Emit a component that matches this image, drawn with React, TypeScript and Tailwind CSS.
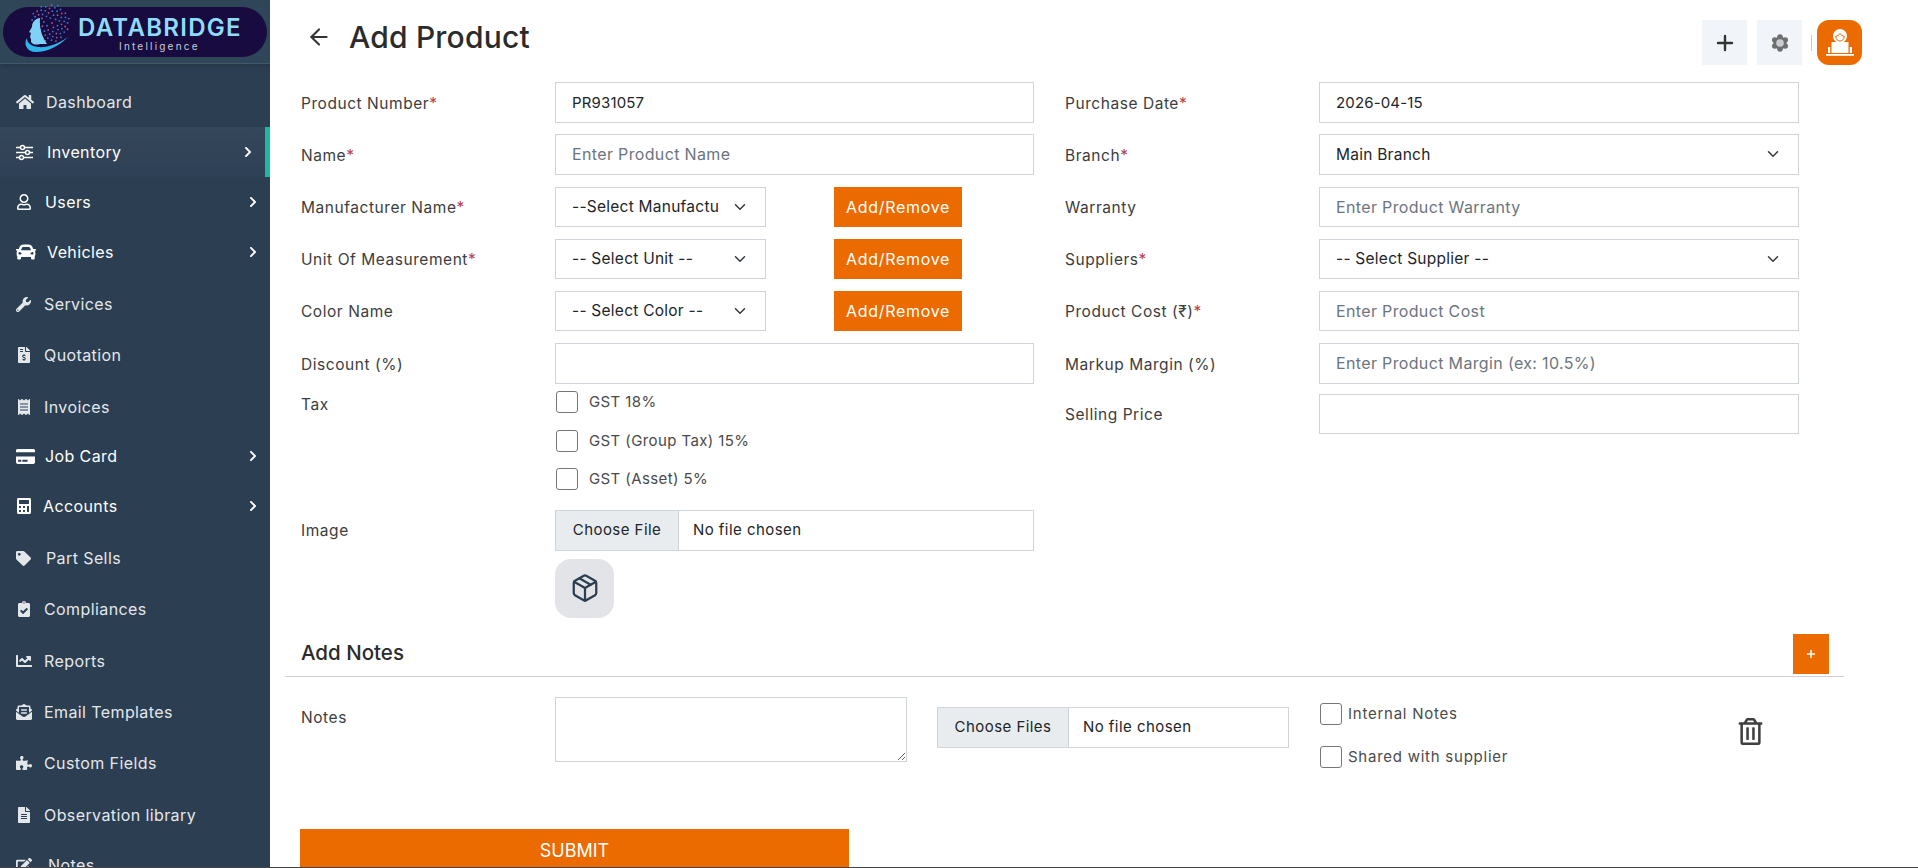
import { ArrowLeft, ChevronDown, Package, Plus } from 'lucide-react';
import {
    FaCalculator,
    FaCar,
    FaChartLine,
    FaChevronRight,
    FaClipboardCheck,
    FaCreditCard,
    FaEdit,
    FaEnvelopeOpenText,
    FaFileAlt,
    FaFileInvoiceDollar,
    FaHome,
    FaPuzzlePiece,
    FaReceipt,
    FaRegTrashAlt,
    FaRegUser,
    FaTag,
    FaWrench,
} from 'react-icons/fa';

function SlidersIcon({ size }: { size: number }) {
    return (
        <svg width={size} height={size} viewBox="0 0 17 17" fill="none" stroke="currentColor" strokeWidth="1.5">
            <path d="M0 3.500h4.500M8.500 3.500H17M0 8.500h9.500M13.500 8.500H17M0 13.500h3.500M7.500 13.500H17" />
            <circle cx="6.500" cy="3.500" r="2" />
            <circle cx="11.500" cy="8.500" r="2" />
            <circle cx="5.500" cy="13.500" r="2" />
        </svg>
    );
}

const navItems = [
    { label: 'Dashboard', icon: FaHome, h: 'h-[50px]', w: 'w-[30px]', size: 18 },
    { label: 'Inventory', icon: SlidersIcon, h: 'h-[50px]', w: 'w-[31px]', size: 17, arrow: true, active: true },
    { label: 'Users', icon: FaRegUser, h: 'h-[51px] pb-[2px]', w: 'w-[29px]', size: 16, arrow: true },
    { label: 'Vehicles', icon: FaCar, h: 'h-[50px] pb-[2px]', w: 'w-[31px]', size: 20, arrow: true },
    { label: 'Services', icon: FaWrench, h: 'h-[51px] pt-px', w: 'w-[28px]', size: 15 },
    { label: 'Quotation', icon: FaFileInvoiceDollar, h: 'h-[51px] pt-px', w: 'w-[28px]', size: 16 },
    { label: 'Invoices', icon: FaReceipt, h: 'h-[52px] pt-px', w: 'w-[28px]', size: 16 },
    { label: 'Job Card', icon: FaCreditCard, h: 'h-[50px] pb-[2px]', w: 'w-[29px]', size: 19, arrow: true },
    { label: 'Accounts', icon: FaCalculator, h: 'h-[50px] pb-[2px]', w: 'w-[27px]', size: 16, arrow: true },
    { label: 'Part Sells', icon: FaTag, h: 'h-[51px] pt-px', w: 'w-[30px]', size: 15 },
    { label: 'Compliances', icon: FaClipboardCheck, h: 'h-[51px] pt-px', w: 'w-[28px]', size: 16 },
    { label: 'Reports', icon: FaChartLine, h: 'h-[52px] pt-px', w: 'w-[28px]', size: 16 },
    { label: 'Email Templates', icon: FaEnvelopeOpenText, h: 'h-[51px] pt-px', w: 'w-[28px]', size: 16 },
    { label: 'Custom Fields', icon: FaPuzzlePiece, h: 'h-[51px]', w: 'w-[28px]', size: 16 },
    { label: 'Observation library', icon: FaFileAlt, h: 'h-[52px] pt-px', w: 'w-[28px]', size: 16 },
    { label: 'Notes', icon: FaEdit, h: 'h-[51px] pb-[2px]', w: 'w-[32px]', size: 16 },
];

// brain dots for the logo
const logoDots = Array.from({ length: 70 }, (_, i) => {
    const a = i * 2.399;
    const r = 2 + Math.sqrt(i) * 2.1;
    return { x: 47 + Math.cos(a) * r, y: 23 + Math.sin(a) * r, pink: i % 3 === 0 };
});

function Logo() {
    return (
        <div className="relative mx-[3px] mt-[7px] h-[50px] w-[264px] rounded-full bg-[#170b3f]">
            <svg className="absolute left-0 top-[-7px]" width="70" height="64" viewBox="0 0 70 64">
                {logoDots.map((d, i) => (
                    <circle key={i} cx={d.x} cy={d.y} r="0.9" fill={d.pink ? '#b0568f' : '#3d7bd6'} />
                ))}
                <path d="M37 18C31 19 29 23 29 27L26 32L28 33L27 37L28 39L28 42C30 45 34 45 37 44L44 44C40 38 36 30 37 18z" fill="#7fd2f6" />
                <path d="M24 38C20 44 24 52 33 52C44 52 56 46 65 37C55 44 44 48 35 47C28 46 24 43 24 38z" fill="#2fb5ea" />
            </svg>
            <div className="absolute left-[75px] top-[8px] text-[24px] font-semibold leading-[26px] tracking-[1.3px] text-[#8fdcf8] [font-family:Inter,sans-serif]">
                DATABRIDGE
            </div>
            <div className="absolute left-[116px] top-[32px] text-[10px] leading-[14px] tracking-[2.2px] text-[#c9cdd8] [font-family:Inter,sans-serif]">
                Intelligence
            </div>
        </div>
    );
}

function Sidebar() {
    return (
        <aside className="z-10 flex h-full w-[270px] shrink-0 flex-col overflow-hidden bg-[#2b3e52]">
            <div className="h-[64px] shrink-0 border-b border-[#44566a] bg-[#2f4558] shadow-[2px_0_6px_rgba(0,0,0,0.3)]">
                <Logo />
            </div>
            <nav className="pt-[13px]">
                {navItems.map((item) => {
                    const Icon = item.icon;
                    return (
                        <div
                            key={item.label}
                            className={`flex items-center pl-4 pr-[11px] text-[16px] ${item.h} ${
                                item.active ? 'border-r-[5px] border-[#1abc9c] bg-gradient-to-b from-[#35475a] to-[#2d4055]' : ''
                            } ${item.arrow ? 'text-white' : 'text-[#e4e7ea]'}`}
                        >
                            <span className={`flex shrink-0 ${item.w}`}>
                                <Icon size={item.size} />
                            </span>
                            <span className="flex-1 whitespace-nowrap tracking-[0.4px]">{item.label}</span>
                            {item.arrow && <FaChevronRight size={12} />}
                        </div>
                    );
                })}
            </nav>
        </aside>
    );
}

function Req() {
    return <span className="text-[#b8404c]">*</span>;
}

function Label({ text, required }: { text: string; required?: boolean }) {
    return (
        <label className="block w-[254px] shrink-0 pt-[2px] text-[15.5px] tracking-[0.55px] text-[#3d3d3d]">
            {text}
            {required && <Req />}
        </label>
    );
}

const inputCls = 'h-full w-full border border-[#ced4da] bg-white px-4 text-[#212529] outline-none';

function Input({ value, placeholder }: { value?: string; placeholder?: string }) {
    return (
        <input
            className={`${inputCls} text-[15px] tracking-[0.15px] placeholder:text-[16px] placeholder:tracking-[0.35px] placeholder:text-[#6c757d]`}
            defaultValue={value}
            placeholder={placeholder}
        />
    );
}

function Select({ value, width }: { value: string; width: string }) {
    return (
        <div className={`relative h-full ${width}`}>
            <select className={`${inputCls} appearance-none pr-[46px] text-[15.5px] tracking-[0.25px]`} defaultValue={value}>
                <option>{value}</option>
            </select>
            <ChevronDown size={18} strokeWidth={2} className="absolute right-[17px] top-[11px] text-[#343a40]" />
        </div>
    );
}

function AddRemove() {
    return (
        <button className="ml-[68px] h-full w-[128px] bg-[#ec6b00] pb-px text-[16px] tracking-[0.7px] text-white">
            Add/Remove
        </button>
    );
}

function Row({ label, required, h, mb, children }: { label: string; required?: boolean; h: string; mb: string; children: React.ReactNode }) {
    return (
        <div className={`flex items-center ${h} ${mb}`}>
            <Label text={label} required={required} />
            {children}
        </div>
    );
}

function FilePicker({ button, buttonW, width }: { button: string; buttonW: string; width: string }) {
    return (
        <div className={`flex h-[41px] items-center border border-[#ced4da] text-[15px] tracking-[0.45px] text-[#212529] ${width}`}>
            <span className={`flex h-full items-center justify-center border-r border-[#ced4da] bg-[#e9ecef] ${buttonW}`}>{button}</span>
            <span className="pl-[14px]">No file chosen</span>
        </div>
    );
}

function Check({ label, cls }: { label: string; cls: string }) {
    return (
        <label className={`flex items-center text-[15px] text-[#4a4a4a] ${cls}`}>
            <input type="checkbox" className="h-[22px] w-[22px] appearance-none rounded-[3px] border border-[#767676] bg-white" />
            {label}
        </label>
    );
}

function GearIcon() {
    const lobes = [0, 60, 120, 180, 240, 300];
    return (
        <svg width="20" height="20" viewBox="0 0 20 20">
            {lobes.map((deg) => (
                <circle
                    key={deg}
                    cx={10 + Math.cos(((deg + 30) * Math.PI) / 180) * 6}
                    cy={10 + Math.sin(((deg + 30) * Math.PI) / 180) * 6}
                    r="2.800"
                    fill="#6f6f6f"
                />
            ))}
            <circle cx="10" cy="10" r="6.500" fill="#6f6f6f" />
            <circle cx="10" cy="10" r="3.800" fill="#c9ccd0" />
        </svg>
    );
}

function AvatarIcon() {
    return (
        <svg width="30" height="30" viewBox="0 0 30 30" fill="#fff">
            <circle cx="15" cy="8" r="7" />
            <path d="M10.500 8.500c2-.5 3.500-1.500 4.500-3 1 1.500 2.500 2.500 4.500 3M10.800 8.500c0 2.500 1.800 4.500 4.200 4.500s4.200-2 4.200-4.500" fill="none" stroke="#ec6b00" strokeWidth="1" />
            <rect x="6.500" y="14" width="17" height="11" />
            <rect x="3" y="19" width="2.200" height="6" />
            <rect x="24.800" y="19" width="2.200" height="6" />
            <rect x="1" y="26" width="28" height="1.800" />
        </svg>
    );
}

export default function App() {
    return (
        <div className="relative flex h-[868px] w-[1918px] overflow-hidden bg-white [font-family:Inter,sans-serif]">
            <Sidebar />
            <main className="min-w-0 flex-1">
                <header className="flex h-[82px] items-start justify-between pl-[36px] pr-[56px]">
                    <div className="mt-[17px] flex items-center">
                        <ArrowLeft size={26} strokeWidth={1.9} className="text-[#333]" />
                        <h1 className="ml-[17px] text-[30px] font-medium leading-[40px] tracking-[0.2px] text-[#2b2b2b]">Add Product</h1>
                    </div>
                    <div className="mt-5 flex items-center">
                        <button className="flex h-[45px] w-[45px] items-center justify-center bg-[#f1f4f9] text-[#333]">
                            <Plus size={24} strokeWidth={2.4} />
                        </button>
                        <button className="ml-[10px] flex h-[45px] w-[45px] items-center justify-center bg-[#f1f4f9]">
                            <GearIcon />
                        </button>
                        <span className="ml-[9px] mr-[5px] h-[16px] w-px bg-[#c8c8c8]" />
                        <span className="flex h-[45px] w-[45px] items-center justify-center rounded-[12px] bg-[#ec6b00]">
                            <AvatarIcon />
                        </span>
                    </div>
                </header>

                <div className="flex pl-[31px]">
                    <div className="w-[764px] shrink-0">
                        <div className="w-[733px]">
                            <Row label="Product Number" required h="h-[41px]" mb="mb-[11px]">
                                <Input value="PR931057" />
                            </Row>
                            <Row label="Name" required h="h-[41px]" mb="mb-3">
                                <Input placeholder="Enter Product Name" />
                            </Row>
                            <Row label="Manufacturer Name" required h="h-[40px]" mb="mb-3">
                                <Select value="--Select Manufacturer--" width="w-[211px]" />
                                <AddRemove />
                            </Row>
                            <Row label="Unit Of Measurement" required h="h-[40px]" mb="mb-3">
                                <Select value="-- Select Unit --" width="w-[211px]" />
                                <AddRemove />
                            </Row>
                            <Row label="Color Name" h="h-[40px]" mb="mb-3">
                                <Select value="-- Select Color --" width="w-[211px]" />
                                <AddRemove />
                            </Row>
                            <Row label="Discount (%)" h="h-[41px]" mb="mb-[7px]">
                                <Input />
                            </Row>
                            <div className="flex">
                                <div>
                                    <Label text="Tax" />
                                </div>
                                <div className="flex flex-col gap-[16px] pl-px">
                                    <Check label="GST 18%" cls="gap-[11px] tracking-[0.4px]" />
                                    <Check label="GST (Group Tax) 15%" cls="gap-[11px] tracking-[0.4px]" />
                                    <Check label="GST (Asset) 5%" cls="gap-[11px] tracking-[0.4px]" />
                                </div>
                            </div>
                            <Row label="Image" h="h-[41px] mt-[19px]" mb="mb-[8px]">
                                <FilePicker button="Choose File" buttonW="w-[123px]" width="w-full" />
                            </Row>
                            <div className="ml-[254px] flex h-[59px] w-[59px] items-center justify-center rounded-[16px] bg-[#e2e4e8] text-[#2c3e50]">
                                <Package size={30} strokeWidth={1.8} />
                            </div>
                        </div>
                    </div>
                    <div className="w-[734px] shrink-0">
                        <Row label="Purchase Date" required h="h-[41px]" mb="mb-[11px]">
                            <Input value="2026-04-15" />
                        </Row>
                        <Row label="Branch" required h="h-[41px]" mb="mb-3">
                            <Select value="Main Branch" width="w-full" />
                        </Row>
                        <Row label="Warranty" h="h-[40px]" mb="mb-3">
                            <Input placeholder="Enter Product Warranty" />
                        </Row>
                        <Row label="Suppliers" required h="h-[40px]" mb="mb-3">
                            <Select value="-- Select Supplier --" width="w-full" />
                        </Row>
                        <Row label="Product Cost (₹)" required h="h-[40px]" mb="mb-3">
                            <Input placeholder="Enter Product Cost" />
                        </Row>
                        <Row label="Markup Margin (%)" h="h-[41px]" mb="mb-[10px]">
                            <Input placeholder="Enter Product Margin (ex: 10.5%)" />
                        </Row>
                        <Row label="Selling Price" h="h-[40px]" mb="mb-0">
                            <Input />
                        </Row>
                    </div>
                </div>

                <div className="ml-[15px] mt-[16px] flex h-[43px] w-[1559px] items-start justify-between border-b border-[#cfcfcf] pl-[16px] pr-[15px]">
                    <h2 className="mt-[7px] text-[20.5px] font-medium leading-[24px] text-[#2b2b2b]">Add Notes</h2>
                    <button className="flex h-[40px] w-[36px] items-center justify-center bg-[#ec6b00] text-white">
                        <Plus size={12} strokeWidth={3} />
                    </button>
                </div>

                <div className="mt-[20px] flex pl-[31px]">
                    <div className="pt-[7px]">
                        <Label text="Notes" />
                    </div>
                    <textarea className="h-[65px] w-[352px] border border-[#ced4da] outline-none" />
                    <div className="ml-[30px] mt-[10px]">
                        <FilePicker button="Choose Files" buttonW="w-[131px]" width="w-[352px]" />
                    </div>
                    <div className="ml-[31px] mt-[6px] flex w-[320px] flex-col gap-[21px]">
                        <Check label="Internal Notes" cls="gap-[6px] tracking-[0.75px]" />
                        <Check label="Shared with supplier" cls="gap-[6px] tracking-[0.75px]" />
                    </div>
                    <FaRegTrashAlt size={27} className="ml-[97px] mt-[21px] text-[#3f3f3f]" />
                </div>

                <button className="ml-[30px] mt-[60px] flex h-[44px] w-[549px] items-center justify-center bg-[#ec6b00] text-[18px] text-white">
                    SUBMIT
                </button>
            </main>
            <div className="absolute inset-x-0 bottom-0 z-20 h-px bg-[#444]" />
        </div>
    );
}
